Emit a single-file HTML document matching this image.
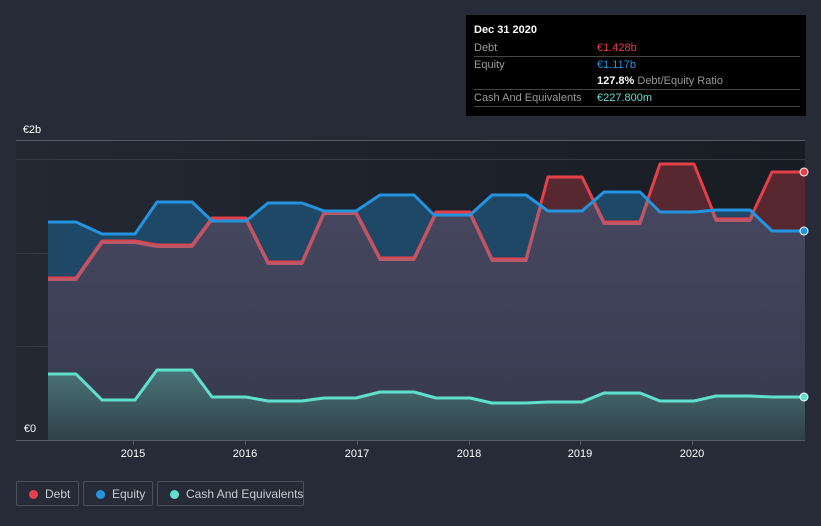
<!DOCTYPE html>
<html><head><meta charset="utf-8"><style>
html,body{margin:0;padding:0;background:#262b37;width:821px;height:526px;overflow:hidden;font-family:"Liberation Sans",sans-serif}
svg{position:absolute;left:0;top:0}
.tip{position:absolute;left:466px;top:15px;width:340px;height:101px;background:#000;color:#fff;font-size:11px}
.row{position:absolute;left:8px;width:326px;border-bottom:1px solid #444;height:16px;line-height:16px}
.l{color:#999;position:absolute;left:0}
.v{position:absolute;left:123px;white-space:nowrap}
.leg{position:absolute;top:481px;height:25px;border:1px solid #4a505c;border-radius:2px;color:#c8ccd4;font-size:12px;line-height:24px;box-sizing:border-box;white-space:nowrap}
.leg i{position:absolute;left:12px;top:8px;width:9px;height:9px;border-radius:50%}
.leg span{position:absolute;left:28px}
</style></head><body>
<svg width="821" height="526">
<defs>
<linearGradient id="bg" x1="0" x2="1"><stop offset="0" stop-color="#232833"/><stop offset="1" stop-color="#181c23"/></linearGradient>
<linearGradient id="cg" x1="0" y1="0" x2="0" y2="1"><stop offset="0" stop-color="#4a7478"/><stop offset="1" stop-color="#2f4048"/></linearGradient>
<linearGradient id="pg" gradientUnits="userSpaceOnUse" x1="0" y1="170" x2="0" y2="440"><stop offset="0" stop-color="#484962"/><stop offset="1" stop-color="#363a4e"/></linearGradient>
<clipPath id="eqc"><polygon points="48,222 76,222 102,234 135,234 157,202 192,202 212,221 246,221 268,203 302,203 324,211 356,211 380,195 414,195 434,215 470,215 492,195 526,195 548,211 582,211 604,192 640,192 660,212 694,212 716,210 750,210 772,231 805,231 805,440 48,440"/></clipPath>
</defs>
<rect x="16" y="140" width="789" height="300" fill="url(#bg)"/>
<line x1="16" y1="140.5" x2="805" y2="140.5" stroke="#555a64"/>
<line x1="16" y1="159.5" x2="805" y2="159.5" stroke="#363b46"/>
<line x1="16" y1="253.5" x2="805" y2="253.5" stroke="#363b46"/>
<line x1="16" y1="346.5" x2="805" y2="346.5" stroke="#363b46"/>
<polygon fill="#1f4866" points="48,222 76,222 102,234 135,234 157,202 192,202 212,221 246,221 268,203 302,203 324,211 356,211 380,195 414,195 434,215 470,215 492,195 526,195 548,211 582,211 604,192 640,192 660,212 694,212 716,210 750,210 772,231 805,231 805,440 48,440"/>
<polygon fill="#57282f" points="48,278 76,278 102,241 135,241 157,245 192,245 212,218 246,218 268,262 302,262 324,212 356,212 380,258 414,258 436,212 470,212 492,259 526,259 548,177 582,177 604,222 640,222 660,164 694,164 716,219 750,219 772,172 805,172 805,440 48,440"/>
<g clip-path="url(#eqc)">
<polygon fill="url(#pg)" points="48,278 76,278 102,241 135,241 157,245 192,245 212,218 246,218 268,262 302,262 324,212 356,212 380,258 414,258 436,212 470,212 492,259 526,259 548,177 582,177 604,222 640,222 660,164 694,164 716,219 750,219 772,172 805,172 805,440 48,440"/>
</g>
<polyline fill="none" stroke="#e5404a" stroke-width="3" stroke-linejoin="round" points="48,278 76,278 102,241 135,241 157,245 192,245 212,218 246,218 268,262 302,262 324,212 356,212 380,258 414,258 436,212 470,212 492,259 526,259 548,177 582,177 604,222 640,222 660,164 694,164 716,219 750,219 772,172 805,172"/>
<g clip-path="url(#eqc)"><polyline fill="none" stroke="#b85868" stroke-width="3" stroke-linejoin="round" points="48,278 76,278 102,241 135,241 157,245 192,245 212,218 246,218 268,262 302,262 324,212 356,212 380,258 414,258 436,212 470,212 492,259 526,259 548,177 582,177 604,222 640,222 660,164 694,164 716,219 750,219 772,172 805,172" transform="translate(0,1.5)"/></g>
<polyline fill="none" stroke="#2394e0" stroke-width="3" stroke-linejoin="round" points="48,222 76,222 102,234 135,234 157,202 192,202 212,221 246,221 268,203 302,203 324,211 356,211 380,195 414,195 434,215 470,215 492,195 526,195 548,211 582,211 604,192 640,192 660,212 694,212 716,210 750,210 772,231 805,231"/>
<polygon fill="url(#cg)" points="48,374 76,374 102,400 135,400 157,370 192,370 212,397 246,397 268,401 302,401 324,398 356,398 380,392 414,392 436,398 470,398 492,403 526,403 548,402 582,402 604,393 640,393 660,401 694,401 716,396 750,396 772,397 805,397 805,440 48,440"/>
<polyline fill="none" stroke="#5ee0cc" stroke-width="3" stroke-linejoin="round" points="48,374 76,374 102,400 135,400 157,370 192,370 212,397 246,397 268,401 302,401 324,398 356,398 380,392 414,392 436,398 470,398 492,403 526,403 548,402 582,402 604,393 640,393 660,401 694,401 716,396 750,396 772,397 805,397"/>
<circle cx="804" cy="172" r="4" fill="#e5404a" stroke="#fff" stroke-width="1"/>
<circle cx="804" cy="231" r="4" fill="#2394e0" stroke="#fff" stroke-width="1"/>
<circle cx="804" cy="397" r="4" fill="#5ee0cc" stroke="#fff" stroke-width="1"/>
<line x1="16" y1="440.5" x2="805" y2="440.5" stroke="#555a64"/>
<g stroke="#555a64"><line x1="133.5" y1="440" x2="133.5" y2="445"/><line x1="245.5" y1="440" x2="245.5" y2="445"/><line x1="357.5" y1="440" x2="357.5" y2="445"/><line x1="469.5" y1="440" x2="469.5" y2="445"/><line x1="580.5" y1="440" x2="580.5" y2="445"/><line x1="692.5" y1="440" x2="692.5" y2="445"/></g>
<g fill="#fff" font-size="11" font-family="Liberation Sans,sans-serif" text-anchor="middle">
<text x="133" y="457">2015</text><text x="245" y="457">2016</text><text x="357" y="457">2017</text><text x="469" y="457">2018</text><text x="580" y="457">2019</text><text x="692" y="457">2020</text>
<text x="32" y="133">€2b</text><text x="30" y="432">€0</text></g>
</svg>
<div class="tip">
<div style="position:absolute;left:8px;top:9px;font-weight:bold">Dec 31 2020</div>
<div class="row" style="top:25px"><span class="l">Debt</span><span class="v" style="color:#e5404a">€1.428b</span></div>
<div class="row" style="top:42px;border:none"><span class="l">Equity</span><span class="v" style="color:#2394e0">€1.117b</span></div>
<div class="row" style="top:58px"><span class="v"><b>127.8%</b> <span style="color:#999">Debt/Equity Ratio</span></span></div>
<div class="row" style="top:75px"><span class="l">Cash And Equivalents</span><span class="v" style="color:#5ee0cc">€227.800m</span></div>
</div>
<div class="leg" style="left:16px;width:63px"><i style="background:#e5404a"></i><span>Debt</span></div>
<div class="leg" style="left:83px;width:70px"><i style="background:#2394e0"></i><span>Equity</span></div>
<div class="leg" style="left:157px;width:147px"><i style="background:#5ee0cc"></i><span>Cash And Equivalents</span></div>
</body></html>
